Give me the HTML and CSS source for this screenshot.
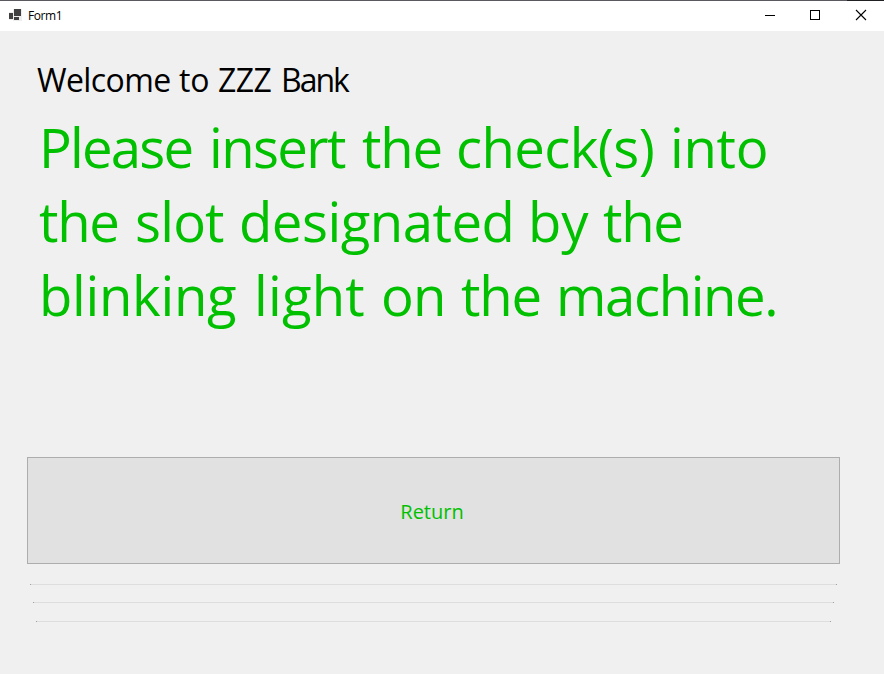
FILE: index.html
```html
<!DOCTYPE html>
<html lang="en">
<head>
<meta charset="utf-8">
<title>Form1</title>
<link rel="stylesheet" href="styles.css">
</head>
<body>
<div class="window">
  <header class="titlebar">
    <svg class="app-icon" width="14" height="13" viewBox="0 0 14 13" shape-rendering="crispEdges">
      <path fill="#eeeeee" d="M4 0h9v12H4zM0 3h5v8H0z"/>
      <path fill="#404040" d="M5 0h7v7H5zM0 4h4v6H0zM5 8h5v3H5z"/>
    </svg>
    <span class="title">Form1</span>
    <div class="controls">
      <svg width="46" height="30" shape-rendering="crispEdges"><path fill="#000" d="M18 14h10v1H18z"/></svg>
      <svg width="46" height="30" shape-rendering="crispEdges"><path fill="none" stroke="#000" d="M17.500 9.500h9v9h-9z"/></svg>
      <svg width="46" height="30"><path fill="none" stroke="#000" stroke-width="1.1" d="M17 9l10 10M27 9L17 19"/></svg>
    </div>
  </header>
  <main class="form">
    <h1 class="welcome"><span class="w-welcome">Welcome</span> <span class="w-to">to</span> <span class="w-zzz">ZZZ</span> <span class="w-bank">Bank</span></h1>
    <p class="message">
      <span class="line"><span class="w-please">Please</span> <span class="w-insert">insert</span> <span class="w-the">the</span> <span class="w-check">check(s)</span> <span class="w-into">into</span></span>
      <span class="line"><span class="w-the-b">the</span> <span class="w-slot">slot</span> <span class="w-designated">designated</span> <span class="w-by">by</span> <span class="w-the-b">the</span></span>
      <span class="line"><span class="w-blinking">blinking</span> <span class="w-light">light</span> <span class="w-on">on</span> <span class="w-the-c">the</span> <span class="w-machine">machine.</span></span>
    </p>
    <button class="return" type="button"><span>Return</span></button>
    <div class="rule rule-a"></div>
    <div class="rule rule-b"></div>
    <div class="rule rule-c"></div>
  </main>
</div>
</body>
</html>
```
FILE: styles.css
```css
* { box-sizing: border-box; }
body { margin: 0; background: #f0f0f0; font-family: "Open Sans", "Noto Sans", sans-serif; }
.window { width: 884px; height: 674px; overflow: hidden; background: #f0f0f0; }
.window::before { content: ""; display: block; height: 1px; background: linear-gradient(90deg, #5a5a5e 847px, #202022 847px); }
.titlebar { display: flex; height: 30px; background: #fff; }
.app-icon { margin: 8px 0 0 9px; }
.title { margin-left: 5px; font-size: 12px; line-height: 30px; letter-spacing: -0.4px; }
.controls { display: flex; margin-left: auto; margin-right: -1px; }
.form { display: flex; flex-direction: column; }
.welcome { display: flex; margin: 27px 0 0 37px; font-size: 32px; font-weight: 400; line-height: 44px; color: #000; white-space: nowrap; }
.message { margin: 8px 0 0 39px; font-size: 54.500px; line-height: 74px; color: #00c000; }
.line { display: flex; white-space: nowrap; }

/* Word widths and tracking */
.w-welcome { width: 142px; letter-spacing: -0.6px; }
.w-to { width: 39px; letter-spacing: -0.2px; }
.w-zzz { width: 63px; letter-spacing: -0.6px; }
.w-bank { letter-spacing: -2px; }
.w-please { width: 170px; letter-spacing: -1.8px; }
.w-insert { width: 153px; letter-spacing: -1.6px; }
.w-the { width: 94px; letter-spacing: -1.2px; }
.w-check { width: 214px; letter-spacing: -0.6px; }
.w-into { letter-spacing: -0.3px; }
.w-the-b { width: 96px; letter-spacing: -1.3px; }
.w-slot { width: 104px; letter-spacing: -0.8px; }
.w-designated { width: 289px; letter-spacing: -0.5px; }
.w-by { width: 75px; letter-spacing: 0; }
.w-blinking { width: 215px; letter-spacing: -0.3px; }
.w-light { width: 127px; letter-spacing: 0.2px; }
.w-on { width: 80px; letter-spacing: -0.8px; }
.w-the-c { width: 95px; letter-spacing: -1.2px; }
.w-machine { letter-spacing: -1.4px; }

.return { margin: 125px 0 0 27px; width: 813px; height: 107px; padding: 2px 3px 0 0; border: 1px solid #adadad; background: #e1e1e1; color: #00c000; font: 20px/28px "Open Sans", "Noto Sans", sans-serif; }
.rule { height: 1px; background: #dedede; border: solid #a0a0a0; border-width: 0 1px; }
.rule-a { width: 807px; margin: 20px 0 0 30px; }
.rule-b { width: 801px; margin: 17px 0 0 33px; }
.rule-c { width: 795px; margin: 18px 0 0 36px; }
```
